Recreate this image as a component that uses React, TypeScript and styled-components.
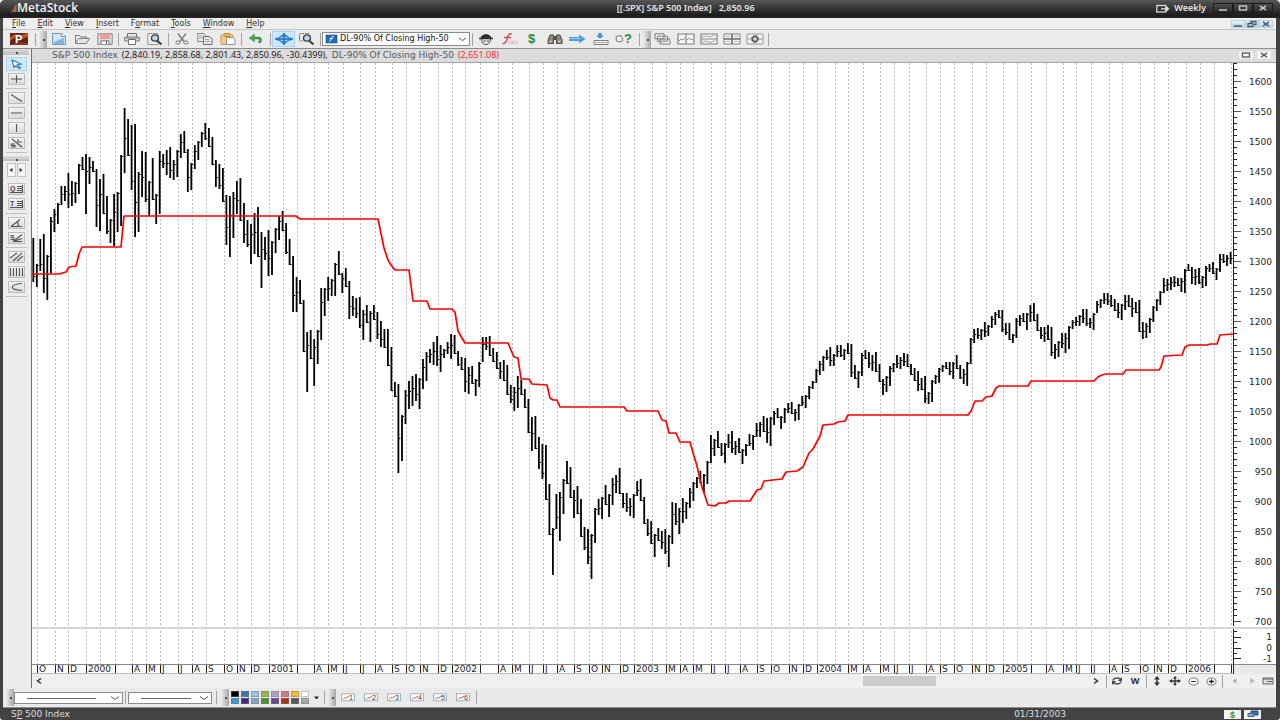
import React from "react";
import styled, { createGlobalStyle, css } from "styled-components";

const GlobalStyle = createGlobalStyle`
  * { box-sizing: border-box; }
  body { margin: 0; background: #ffffff; }
  button, select { font: inherit; color: inherit; margin: 0; padding: 0; border: 0; background: none; }
  svg { display: block; }
`;

const ui = '"DejaVu Sans", Verdana, sans-serif';
const noto = '"Noto Sans", sans-serif';
const arial = '"Liberation Sans", Arial, sans-serif';

const Frame = styled.div`
  display: flex;
  flex-direction: column;
  min-height: 100vh;
  background: #434343;
  border-radius: 5px 5px 3px 3px;
  overflow: hidden;
  font: 8px/12px ${ui};
  color: #303030;
`;

/* ---------- title bar ---------- */

const TitleBar = styled.header`
  display: flex;
  align-items: center;
  height: 18px;
  padding: 0 7px 2px 11px;
  background: linear-gradient(#565656 0, #474747 4px, #303030 10px, #1b1b1b 16px, #2a2a2a 18px);
  color: #e4e4e4;
`;

const Brand = styled.div`
  display: flex;
  align-items: center;
  flex: none;
  width: 48%;
  font: 600 12px/14px "Open Sans", sans-serif;
  color: #f4f4f4;
`;

const DocTitle = styled.h1`
  margin: 0;
  flex: 1;
  font: 600 9px/14px ${noto};
  white-space: pre;
`;

const Period = styled.div`
  display: flex;
  align-items: center;
  gap: 5px;
  margin-right: 7px;
  font: 600 9px/14px ${noto};
`;

const Controls = styled.div<{ $tone: "dark" | "blue" | "pale" }>`
  display: flex;
  gap: ${(p) => (p.$tone === "pale" ? 4 : 0)}px;
  button {
    display: flex;
    align-items: center;
    justify-content: center;
    width: ${(p) => (p.$tone === "dark" ? 20 : 14)}px;
    height: ${(p) => (p.$tone === "dark" ? 10 : 8)}px;
    ${(p) =>
      p.$tone === "dark" &&
      css`
        background: linear-gradient(#4d4d4d, #2a2a2a);
        border: 1px solid #1c1c1c;
        color: #c9c9c9;
      `}
    ${(p) =>
      p.$tone === "blue" &&
      css`
        background: linear-gradient(#eaf4fa, #b8d3e2);
        border: 1px solid #bcd2de;
        color: #3e5b72;
      `}
    ${(p) =>
      p.$tone === "pale" &&
      css`
        background: #f7f7f7;
        border: 1px solid #efefef;
        color: #606060;
      `}
  }
`;

/* ---------- body ---------- */

const Body = styled.div`
  display: flex;
  flex-direction: column;
  flex: 1;
  margin: 0 4px 0 3px;
  background: #ebebeb;
`;

const MenuBar = styled.nav`
  display: flex;
  align-items: center;
  gap: 12px;
  height: 12px;
  padding: 0 3px 0 9px;
  border-bottom: 1px solid #c6c6c6;
  background: #eeeeee;
`;

const MenuItem = styled.button`
  line-height: 11px;
  u { text-underline-offset: 1px; }
`;

const Push = styled.span`
  flex: 1;
`;

const ToolBar = styled.div`
  display: flex;
  align-items: center;
  height: 19px;
  padding-left: 6px;
  border-bottom: 1px solid #8c8c8c;
`;

const IconButton = styled.button<{ $w?: number; $on?: boolean }>`
  display: flex;
  align-items: center;
  justify-content: center;
  flex: none;
  width: ${(p) => p.$w ?? 23}px;
  height: 16px;
  ${(p) =>
    p.$on &&
    css`
      background: #cfe8fb;
      border: 1px solid #a9d2ee;
    `}
`;

const Sep = styled.span<{ $before?: number; $after?: number }>`
  flex: none;
  width: 1px;
  height: 13px;
  margin-left: ${(p) => p.$before ?? 2}px;
  margin-right: ${(p) => p.$after ?? 1}px;
  background: #a2a2a2;
`;

const Grip = styled.span`
  flex: none;
  width: 7px;
  height: 17px;
  background: radial-gradient(circle at 4px 9px, #505050 1px, transparent 1px), linear-gradient(90deg, #e2e2e2, #a6a6a6);
`;

const Combo = styled.label<{ $w: number; $h: number }>`
  position: relative;
  flex: none;
  display: block;
  width: ${(p) => p.$w}px;
  height: ${(p) => p.$h}px;
  select {
    appearance: none;
    display: block;
    width: 100%;
    height: 100%;
    padding: 0 16px 0 17px;
    border: 1px solid #8a8a8a;
    background: #ffffff;
    color: #101010;
    font: 8px/12px ${ui};
  }
  svg {
    position: absolute;
    top: 0;
    left: 0;
    pointer-events: none;
  }
`;

const Middle = styled.div`
  display: flex;
  flex: 1;
`;

const Palette = styled.aside`
  display: flex;
  flex-direction: column;
  align-items: center;
  width: 29px;
  padding-right: 2px;
  border-right: 1px solid #6f6f6f;
  background: #ececec;
`;

const PaletteGrip = styled.span<{ $h: number }>`
  width: 26px;
  height: ${(p) => p.$h}px;
  background: radial-gradient(circle at 14px 4px, #505050 1px, transparent 1px), linear-gradient(#dcdcdc, #bdbdbd);
`;

const Tool = styled.button<{ $on?: boolean }>`
  display: flex;
  align-items: center;
  justify-content: center;
  flex: none;
  width: ${(p) => (p.$on ? 21 : 17)}px;
  height: ${(p) => (p.$on ? 14 : 12)}px;
  margin: ${(p) => (p.$on ? "2px 0 2px" : "0 0 3px")};
  border: 1px solid ${(p) => (p.$on ? "#a9d2ee" : "#bdbdbd")};
  background: ${(p) => (p.$on ? "#cfe8fb" : "linear-gradient(#f4f4f4, #d9d9d9)")};
`;

const Rule = styled.span`
  flex: none;
  width: 21px;
  height: 1px;
  margin-bottom: 3px;
  background: #c2c2c2;
`;

const Arrows = styled.div`
  display: flex;
  gap: 1px;
  margin: 2px 0 6px;
  button {
    width: 9px;
    height: 14px;
    border: 1px solid #c4c4c4;
    background: #f6f6f6;
    display: flex;
    align-items: center;
    justify-content: center;
  }
`;

const ChartPane = styled.main`
  display: flex;
  flex-direction: column;
  flex: 1;
  min-width: 0;
`;

const ChartHeader = styled.div`
  display: flex;
  align-items: center;
  gap: 4px;
  height: 14px;
  padding: 0 5px 2px 20px;
  border-bottom: 1px solid #a5a5a5;
  background: #dcdcdc;
  white-space: nowrap;
`;

const SeriesName = styled.span`
  font: 9px/12px ${ui};
  color: #53575c;
`;

const SeriesValue = styled.span<{ $c: string }>`
  font: 9px/12px ${noto};
  color: ${(p) => p.$c};
`;

const Chart = styled.svg`
  width: 100%;
  flex: 1 1 611px;
  min-height: 0;
  background: #ffffff;
  font: 9px ${ui};
`;

const ScrollRow = styled.div`
  display: flex;
  align-items: center;
  height: 14px;
  padding: 0 1px 0 3px;
  background: #f0f0f0;
`;

const Track = styled.div`
  flex: 1;
  height: 10px;
  padding-left: 8px;
`;

const Thumb = styled.div`
  width: 7%;
  height: 10px;
  margin-left: 78%;
  background: #cbcbcb;
`;

const BottomBar = styled.div`
  display: flex;
  align-items: center;
  height: 20px;
  padding-left: 4px;
  border-bottom: 1px solid #8c8c8c;
  background: #eaeaea;
`;

const Swatches = styled.div`
  display: grid;
  grid-template-columns: repeat(8, 8px);
  gap: 1px 2px;
  margin-left: 2px;
`;

const Swatch = styled.button<{ $c: string }>`
  height: 6px;
  background: ${(p) => p.$c};
  border: 1px solid rgba(120, 120, 120, 0.45);
`;

const StatusBar = styled.footer`
  display: flex;
  align-items: center;
  height: 12px;
  padding: 0 19px 0 11px;
  font: 9px/12px ${ui};
  color: #dedede;
`;

const StatusDate = styled.time`
  margin-right: 155px;
`;

const StatusBox = styled.span`
  display: flex;
  align-items: center;
  justify-content: center;
  width: 17px;
  height: 9px;
  margin-left: 3px;
  background: #f2f2f2;
`;

/* ---------- chart data ---------- */

/* Weekly bars as [high, low] in plot units. */
const weeks: number[][] = [
  [238,282],[264,287],[239,271],[234,293],[255,300],[217,273],[209,232],[203,224],[186,205],[186,201],
  [173,208],[181,206],[182,203],[164,194],[157,170],[154,214],[157,184],[161,172],[169,227],[179,231],
  [174,214],[196,234],[219,243],[194,246],[192,232],[155,226],[108,173],[119,156],[125,190],[124,237],
  [172,232],[151,197],[152,202],[181,216],[158,200],[194,224],[151,214],[154,168],[150,175],[147,178],
  [160,180],[150,177],[134,158],[131,153],[149,192],[163,190],[145,169],[141,160],[132,147],[123,140],
  [128,147],[137,165],[160,187],[164,189],[168,202],[195,245],[196,257],[192,238],[181,214],[178,221],
  [203,243],[220,247],[224,264],[213,254],[207,257],[232,288],[237,260],[230,276],[241,275],[228,253],
  [216,240],[211,231],[223,254],[239,265],[256,312],[277,312],[280,304],[300,352],[332,392],[330,359],
  [339,386],[330,364],[288,340],[288,316],[277,301],[279,296],[263,296],[251,275],[273,293],[268,287],
  [281,319],[296,316],[298,318],[297,328],[310,340],[305,323],[311,342],[305,320],[312,339],[321,347],
  [329,348],[329,366],[347,391],[382,397],[384,473],[415,461],[390,424],[381,409],[376,406],[374,401],
  [378,409],[359,389],[352,381],[349,363],[342,365],[336,366],[345,372],[349,358],[342,354],[334,359],
  [335,354],[351,366],[357,370],[358,392],[367,394],[366,384],[379,396],[362,387],[337,362],[337,350],
  [336,356],[348,362],[352,369],[362,379],[360,381],[365,395],[385,403],[387,411],[376,408],[380,395],
  [389,408],[399,433],[417,451],[416,449],[437,469],[444,479],[445,500],[484,535],[528,575],[494,529],
  [492,541],[479,514],[461,484],[467,498],[490,518],[486,514],[499,537],[527,550],[529,564],[534,579],
  [508,543],[499,515],[497,519],[485,505],[494,517],[478,505],[475,493],[468,494],[493,508],[493,512],
  [498,516],[494,518],[481,496],[479,501],[497,524],[519,536],[521,544],[534,557],[528,541],[531,549],
  [529,554],[535,567],[502,544],[503,525],[508,534],[498,523],[502,519],[488,508],[482,501],[477,488],
  [471,483],[474,493],[461,484],[435,463],[439,456],[431,448],[443,456],[443,463],[434,448],[431,453],
  [441,455],[438,453],[449,464],[444,456],[434,446],[435,450],[423,437],[422,437],[416,432],[418,443],
  [417,446],[411,425],[408,418],[416,429],[408,423],[403,413],[402,414],[409,421],[404,420],[396,406],
  [395,408],[386,399],[381,389],[369,383],[361,375],[356,371],[350,360],[347,366],[354,366],[345,357],
  [345,357],[349,360],[343,354],[344,377],[365,379],[371,388],[353,376],[350,359],[352,368],[355,371],
  [352,372],[364,382],[379,395],[376,392],[366,386],[363,372],[355,368],[357,369],[353,366],[354,367],
  [364,375],[368,381],[371,391],[378,390],[376,403],[392,404],[380,402],[375,384],[368,383],[365,372],
  [362,369],[362,375],[362,379],[355,369],[365,379],[369,384],[362,386],[338,364],[329,343],[328,339],
  [329,340],[322,337],[325,336],[316,328],[312,325],[310,318],[310,332],[323,335],[323,340],[334,343],
  [318,338],[315,326],[313,322],[313,330],[305,322],[303,321],[314,331],[327,339],[327,342],[325,340],
  [327,356],[344,359],[341,357],[333,348],[333,353],[326,349],[320,329],[317,326],[315,326],[309,323],
  [309,326],[318,328],[313,330],[301,313],[299,308],[293,304],[293,305],[295,307],[299,311],[303,318],
  [304,320],[295,310],[295,307],[298,317],[302,313],[300,332],[322,339],[323,338],[318,333],[306,322],
  [299,311],[291,305],[278,293],[279,291],[277,290],[276,287],[278,286],[278,292],[269,293],[264,271],
  [267,284],[269,285],[268,284],[276,288],[266,286],[264,272],[262,274],[268,280],[254,272],[254,263],
  [255,266],[252,264],
];

const weekX = (i: number) => (33.3 + i * 3.511).toFixed(1);

const rangePath = weeks.map(([high, low], i) => `M${weekX(i)} ${high}V${low}`).join("");

const closePath = weeks
  .map(([high, low], i) => {
    const next = weeks[Math.min(i + 1, weeks.length - 1)];
    const close = Math.round(Math.max(high + 1, Math.min(low - 1, (next[0] + next[1]) / 2)));
    return `M${weekX(i)} ${close + 0.5}h2`;
  })
  .join("");

const stopLine =
  "32,274 60,274 62,273 66,272 69,267 76,266 79,254 82,247 121,247 124,216 296,216 300,219 378,219 384,248 388,260 391,265 395,270 409,270 413,301 427,301 430,309 452,309 455,312 458,331 462,338 465,343 508,343 514,357 518,358 521,379 529,379 532,384 547,385 550,398 553,400 557,400 560,407 624,407 627,411 658,411 662,420 666,421 669,433 676,433 680,442 690,442 694,456 697,466 701,484 708,505 715,506 719,503 726,503 729,501 750,501 757,490 761,489 764,481 782,479 786,472 797,471 803,467 809,453 813,449 820,436 823,425 834,424 838,422 845,421 848,415 968,415 971,411 975,401 982,401 986,397 992,396 996,388 999,386 1028,386 1031,381 1094,381 1098,377 1102,375 1106,374 1123,374 1126,370 1159,370 1161,367 1164,356 1182,355 1185,347 1189,345 1207,345 1210,344 1217,344 1220,335 1233,334";

/* Month starts; "-" has a grid line only, "" has an unlabelled tick. */
const months: [number, string][] = [
  [37,"O"],[55,"N"],[68,"D"],[86,"2000"],[100,"-"],[115,""],[132,"A"],[146,"M"],[160,"J"],[178,"J"],[192,"A"],[206,"S"],
  [224,"O"],[237,"N"],[251,"D"],[269,"2001"],[283,"-"],[297,""],[314,"A"],[328,"M"],[343,"J"],[360,"J"],[375,"A"],[392,"S"],
  [406,"O"],[420,"N"],[438,"D"],[452,"2002"],[465,"-"],[480,""],[498,"A"],[512,"M"],[529,"J"],[543,"J"],[557,"A"],[574,"S"],
  [589,"O"],[602,"N"],[620,"D"],[634,"2003"],[652,"-"],[666,"M"],[680,"A"],[693,"M"],[711,"J"],[725,"J"],[740,"A"],[757,"S"],
  [771,"O"],[789,"N"],[803,"D"],[817,"2004"],[835,"-"],[848,"M"],[863,"A"],[880,"M"],[894,"J"],[909,"J"],[926,"A"],[940,"S"],
  [954,"O"],[972,"N"],[986,"D"],[1003,"2005"],[1017,"-"],[1031,""],[1046,"A"],[1063,"M"],[1076,"J"],[1091,"J"],[1109,"A"],[1122,"S"],
  [1140,"O"],[1154,"N"],[1168,"D"],[1186,"2006"],[1200,"-"],[1214,""],[1231,""],
];

const priceY = (p: number) => Math.round(81 + (1600 - p) * 0.5996);
const minorPrices = Array.from({ length: 94 }, (_, i) => 1630 - i * 10);
const majorPrices = Array.from({ length: 19 }, (_, i) => 1600 - i * 50);

function PriceChart() {
  return (
    <Chart viewBox="32 63 1244 611" preserveAspectRatio="none" role="img" aria-label="S&P 500 weekly price chart">
      <g shapeRendering="crispEdges" fill="none">
        <path d={months.map(([x]) => `M${x + 0.5} 63V664`).join("")} stroke="#bdbdbd" strokeDasharray="2 2" />
        <path d="M32 627.5H1276" stroke="#d6d6d6" strokeWidth="2" />
        <rect x="1234" y="665" width="42" height="9" fill="#e9e9e9" />
        <path d="M32 664.5H1276" stroke="#858585" />
        <path d={months.filter(([, t]) => t !== "-").map(([x]) => `M${x + 0.5} 665V674`).join("")} stroke="#202020" />
        <path d="M32 673.5H1233" stroke="#bdbdbd" />
      </g>
      <path d={rangePath} stroke="#000000" strokeWidth="1.8" fill="none" />
      <path d={closePath} stroke="#000000" strokeWidth="1" fill="none" />
      <polyline points={stopLine} stroke="#ff0000" strokeWidth="1.7" fill="none" strokeLinejoin="round" />
      <g shapeRendering="crispEdges" stroke="#222222" fill="none">
        <path d="M1233.5 63V626M1233.5 629V674" />
        <path d={minorPrices.map((p) => `M1234 ${priceY(p) + 0.5}h3`).join("")} />
        <path d={majorPrices.map((p) => `M1234 ${priceY(p) + 0.5}h7`).join("")} stroke="#555555" />
        <path d="M1234 631.5h3M1234 637.5h7M1234 642.5h3M1234 648.5h7M1234 653.5h3M1234 658.5h7" />
      </g>
      <g textAnchor="end" fill="#262626">
        {majorPrices.map((p) => (
          <text key={p} x="1272" y={priceY(p) + 4}>{p}</text>
        ))}
        <text x="1272" y="640">1</text>
        <text x="1272" y="651">0</text>
        <text x="1272" y="662">-1</text>
      </g>
      <g fill="#1c1c2c">
        {months.filter(([, t]) => t && t !== "-").map(([x, t]) => (
          <text key={x} x={x + 2} y="672">{t}</text>
        ))}
      </g>
    </Chart>
  );
}

/* ---------- icons ---------- */

type Draw = { w?: number; h?: number; children: React.ReactNode };
const Pic = ({ w = 16, h = 12, children }: Draw) => (
  <svg width={w} height={h} viewBox={`0 0 ${w} ${h}`} fill="none" stroke="#777" strokeWidth="1" aria-hidden="true">
    {children}
  </svg>
);

const Minimize = () => <Pic w={10} h={8}><path d="M1 6h8" stroke="currentColor" strokeWidth="1.5" /></Pic>;
const Maximize = () => <Pic w={10} h={8}><rect x="1.5" y="2" width="7" height="4" stroke="currentColor" strokeWidth="1.4" /></Pic>;
const Restore = () => <Pic w={10} h={8}><path d="M4 3V1.5h5v3H7M1 3.5h5v3H1z" stroke="currentColor" strokeWidth="1.3" /></Pic>;
const Close = () => <Pic w={10} h={8}><path d="M2 1.8l6 4.4M8 1.8L2 6.2" stroke="currentColor" strokeWidth="1.5" /></Pic>;

const Magnifier = () => (
  <>
    <path d="M10.5 8l4 3.5" stroke="#303a42" strokeWidth="2" />
    <ellipse cx="8" cy="5" rx="3.5" ry="3.2" fill="#b9d8ee" stroke="#303a42" strokeWidth="1.3" />
  </>
);

const icons = {
  file: <Pic><path d="M1.5.5h9l4 3v8h-13z" fill="#cfe6f6" stroke="#7c98ac" /><path d="M10.5.5v3h4" fill="#fff" stroke="#7c98ac" /><path d="M3 9l10-4v6H3z" fill="#7ab6e2" stroke="none" /></Pic>,
  folder: <Pic><path d="M1.5 10.5v-8h4l1 1.5h6v2" fill="#eee" /><path d="M1.5 10.5l3-5h11l-3 5z" fill="#e4e6e6" stroke="#7d8588" /></Pic>,
  save: <Pic><path d="M.8.8h14.4v10.5H.8z" fill="#dcdcdc" stroke="#868686" /><path d="M3 1h10v5H3z" fill="#ef9a96" stroke="none" /><path d="M4 11V7.800h8V11" fill="#fff" /><path d="M9.500 8v3" stroke="#555" /></Pic>,
  print: <Pic><path d="M3.500 4V.5h9V4M.8 4h14.400v4H.8z" fill="#e6e6e6" stroke="#707070" /><path d="M4.500 6.500h7v5h-7z" fill="#fff" stroke="#707070" /><path d="M2 5.500h12" stroke="#999" /></Pic>,
  preview: <Pic><path d="M.8.5h10v11H.8z" fill="#eee" stroke="#999" /><Magnifier /></Pic>,
  cut: <Pic><path d="M4 .5l6 8M12 .5l-6 8" stroke="#7a7a7a" strokeWidth="1.300" /><ellipse cx="4" cy="9.500" rx="2.200" ry="1.600" /><ellipse cx="12" cy="9.500" rx="2.200" ry="1.600" /></Pic>,
  copy: <Pic><path d="M.8.5h6l2 2v6h-8z" fill="#eee" stroke="#808080" /><path d="M6.500 3.500h6l2.500 2v6H6.500z" fill="#e6e6e6" stroke="#707070" /><path d="M8 6.500h4M8 8.500h5M2 3h4M2 5h4" stroke="#aaa" /></Pic>,
  paste: <Pic><path d="M1 2h12v9.500H1z" fill="#f3cf83" stroke="#b8a070" /><path d="M4 .5h6v3H4z" fill="#f0b43c" stroke="#c2923a" /><path d="M6.500 4.500h6l2.500 2v5H6.500z" fill="#fff" stroke="#8d9298" /></Pic>,
  undo: <Pic><path d="M5 5H10c3.500 0 3.500 3.500.5 4.500" stroke="#3d8f4d" strokeWidth="2.400" /><path d="M1 5l5.500-4v8z" fill="#4fa35c" stroke="#3d8f4d" strokeWidth=".5" /></Pic>,
  cross: <Pic w={18}><ellipse cx="9" cy="6" rx="5" ry="3.500" fill="#8cc6f2" stroke="#1f7fd0" strokeWidth="1.300" /><path d="M9 0v12M0 6h18" stroke="#1f6fc0" strokeWidth="1.400" /><path d="M9 0l2 2H7zM9 12l2-2H7zM0 6l3-2v4zM18 6l-3-2v4z" fill="#1f7fd0" stroke="none" /></Pic>,
  zoomArea: <Pic><path d="M.5 5V.5h10" stroke="#666" strokeDasharray="1.500 1" /><path d="M.5 5v3h4" stroke="#666" strokeDasharray="1.500 1" /><Magnifier /></Pic>,
  expert: <Pic><ellipse cx="8" cy="7" rx="4.500" ry="4.500" fill="#e9e4de" stroke="#555" /><path d="M3 5.500C3 .5 13 .5 13 5.500z" fill="#303030" stroke="#222" /><path d="M1 5.500h14" stroke="#333" strokeWidth="1.500" /><path d="M5.500 8h2M9 8h2" stroke="#333" /></Pic>,
  fx: <Pic w={18}><path d="M12 1C9 0 8 2 7.500 4.500S6 11 2.500 10.500M4 4.500h7" stroke="#cf4a63" strokeWidth="1.300" /><path d="M9.500 7.500c-1 1-1 2.500 0 3.500M16 7.500c1 1 1 2.500 0 3.500M11 8l3.500 3M14.500 8L11 11" stroke="#df8494" strokeWidth=".8" /></Pic>,
  binoc: <Pic><path d="M3 2h3.500v8.500H1V7zM13 2H9.500v8.500H15V7z" fill="#8d8980" stroke="#4d4944" /><path d="M6.500 3h3v4h-3z" fill="#5c564e" stroke="none" /><path d="M2.500 7.500h2v2h-2zM11.500 7.500h2v2h-2z" fill="#e8c98e" stroke="none" /></Pic>,
  arrow: <Pic w={17}><path d="M0 4h10V1.500L16.500 6 10 10.500V8H0z" fill="#4a9ede" stroke="none" /><path d="M0 5.500h11" stroke="#9cd0f5" /></Pic>,
  tray: <Pic><path d="M1 7.500h14v4H1z" fill="#ededed" stroke="#808080" /><path d="M2.500 9.500h11" stroke="#aaa" /><path d="M5.500 2.500V0h3v2.500h2.500L7 5.500l-4-3z" fill="#3b8fd6" stroke="none" /></Pic>,
  cascade: <Pic w={17}><path d="M1 .8h9v5H1zM3.500 3.200h10v5h-10zM6 6h10v5H6z" fill="#f2f2f2" stroke="#7d7d7d" /><path d="M7 9.500l3-2 2 1 3-2" stroke="#aaa" /></Pic>,
  columns: <Pic w={18}><path d="M1 1h16v10H1zM9 1v10" fill="#f6f6f6" stroke="#808080" strokeWidth="1.200" /><path d="M2 8l2-2 2 1 2-2M10 7l2-2 2 2 2-1" stroke="#8e8e8e" /></Pic>,
  rows: <Pic w={18}><path d="M1 1h16v10H1zM1 6h16" fill="#f6f6f6" stroke="#808080" strokeWidth="1.200" /><path d="M2 4l4-1 4 1 5-2M2 9l4-1 4 1.500 5-2" stroke="#a4a4a4" /></Pic>,
  tile: <Pic w={18}><path d="M1 1h16v10H1z" fill="#f6f6f6" stroke="#808080" /><path d="M1 6h16M9 1v10" stroke="#6a6a6a" strokeWidth="1.500" /><path d="M2.500 3.500h4.500M11 3.500h4.500M2.500 8.500h4.500M11 8.500h4.500" stroke="#bdbdbd" /></Pic>,
  layout: <Pic w={18}><path d="M1 1h16v10H1zM1 6h16" fill="#f2f2f2" stroke="#999" /><circle cx="9" cy="6" r="3" fill="#ddd" stroke="#4b4b4b" strokeWidth="1.800" strokeDasharray="1.600 .7" /><circle cx="9" cy="6" r="2.400" stroke="#4b4b4b" /></Pic>,
};

const Bold = styled.span<{ $c: string }>`
  font: 700 13px/14px ${arial};
  color: ${(p) => p.$c};
`;

const Letter = styled.span`
  font: 700 9px/14px ${noto};
`;

const Btn = ({ name, children, ...rest }: { name: string; children: React.ReactNode; $w?: number; $on?: boolean }) => (
  <IconButton type="button" aria-label={name} title={name} {...rest}>{children}</IconButton>
);

const PalTool = ({ name, d, on, letter }: { name: string; d: string; on?: boolean; letter?: string }) => (
  <Tool type="button" aria-label={name} title={name} $on={on}>
    <Pic w={15} h={10}>
      {letter && <text x="1" y="7" fontFamily="Liberation Sans" fontSize="7" fontWeight="700" fill="#444" stroke="none">{letter}</text>}
      <path d={d} stroke={on ? "#2474ad" : "#555"} strokeWidth="1.100" fill={on ? "#fff" : "none"} />
    </Pic>
  </Tool>
);

const menus = [["", "F", "ile"], ["", "E", "dit"], ["", "V", "iew"], ["", "I", "nsert"], ["F", "o", "rmat"], ["", "T", "ools"], ["", "W", "indow"], ["", "H", "elp"]];

const colours = [
  "#000000", "#3a76ab", "#93c6e8", "#9ab559", "#b3a0c9", "#cf7b7b", "#efbe35", "#ffffff",
  "#3c9bd6", "#4b2380", "#84a6c2", "#4b8f35", "#6b4494", "#b0301c", "#595959", "#a6a6a6",
];

const LineCombo = ({ w, name }: { w: number; name: string }) => (
  <Combo $w={w} $h={12}>
    <select aria-label={name}><option value="solid" aria-label="Solid" /></select>
    <Pic w={w} h={12}>
      <path d={`M13 6.500H${Math.round(w * 0.75)}`} stroke="#666" />
      <path d={`M${w - 12} 4.500l4 3 4-3`} stroke="#555" />
    </Pic>
  </Combo>
);

export default function App() {
  return (
    <Frame>
      <GlobalStyle />
      <TitleBar>
        <Brand>
          <Pic w={6} h={10}><path d="M0 9L5.500 1v8z" fill="#d5683a" stroke="none" /><path d="M1.500 9V6M3.500 9V4" stroke="#5b3020" strokeWidth=".6" /></Pic>
          MetaStock
        </Brand>
        <DocTitle>{"[[.SPX] S&P 500 Index]   2,850.96"}</DocTitle>
        <Period>
          <Pic w={13} h={9}><rect x=".8" y="1.500" width="9" height="6.500" stroke="#d8d8d8" strokeWidth="1.300" /><path d="M5 4.800h7.500M10 2.500l2.500 2.300L10 7" stroke="#e8e8e8" strokeWidth="1.300" /></Pic>
          Weekly
        </Period>
        <Controls $tone="dark">
          <button type="button" aria-label="Minimize"><Minimize /></button>
          <button type="button" aria-label="Maximize"><Maximize /></button>
          <button type="button" aria-label="Close"><Close /></button>
        </Controls>
      </TitleBar>

      <Body>
        <MenuBar>
          {menus.map(([a, b, c]) => (
            <MenuItem key={b} type="button">{a}<u>{b}</u>{c}</MenuItem>
          ))}
          <Push />
          <Controls $tone="blue">
            <button type="button" aria-label="Minimize chart"><Minimize /></button>
            <button type="button" aria-label="Restore chart"><Restore /></button>
            <button type="button" aria-label="Close chart"><Close /></button>
          </Controls>
        </MenuBar>

        <ToolBar>
          <Btn name="Power Console" $w={20}>
            <Pic w={18} h={12}>
              <rect width="18" height="12" fill="#5b2618" stroke="none" />
              <path d="M0 4l5-3 6 1 7-2v4l-6 2-6-2-6 4z" fill="#b9542f" stroke="none" />
              <path d="M0 12l7-3 11 1v2z" fill="#8c3a22" stroke="none" />
              <text x="5" y="10" fontFamily="Liberation Sans" fontSize="11" fontWeight="700" fill="#fff" stroke="none">P</text>
            </Pic>
          </Btn>
          <Sep $before={6} $after={4} />
          <Grip />
          <Btn name="New">{icons.file}</Btn>
          <Btn name="Open">{icons.folder}</Btn>
          <Btn name="Save">{icons.save}</Btn>
          <Sep />
          <Btn name="Print">{icons.print}</Btn>
          <Btn name="Print preview">{icons.preview}</Btn>
          <Sep />
          <Btn name="Cut">{icons.cut}</Btn>
          <Btn name="Copy">{icons.copy}</Btn>
          <Btn name="Paste">{icons.paste}</Btn>
          <Sep />
          <Btn name="Undo" $w={25}>{icons.undo}</Btn>
          <Sep />
          <Btn name="Crosshair" $on>{icons.cross}</Btn>
          <Btn name="Zoom box">{icons.zoomArea}</Btn>
          <Sep />
          <Combo $w={148} $h={14}>
            <select aria-label="Indicator"><option>DL-90% Of Closing High-50</option></select>
            <Pic w={148} h={14}>
              <rect x="4" y="3" width="11" height="8" fill="#1c6db8" stroke="#134b80" strokeWidth=".6" />
              <path d="M12 4.500c-2-.5-2.500.5-3 2.500S8 9.500 7 9.500M7.500 6.500h3.500" stroke="#fff" />
              <path d="M137 6l3.500 2.500L144 6" stroke="#555" />
            </Pic>
          </Combo>
          <Sep />
          <Btn name="Expert Advisor">{icons.expert}</Btn>
          <Btn name="Indicator Builder">{icons.fx}</Btn>
          <Btn name="System Tester"><Bold $c="#2f8a35">$</Bold></Btn>
          <Btn name="Explorer">{icons.binoc}</Btn>
          <Btn name="Forecaster">{icons.arrow}</Btn>
          <Btn name="Download">{icons.tray}</Btn>
          <Btn name="Help">
            <Pic w={9} h={10}><path d="M1 2.500l5-1 2 5-3 1.500-3.500-1z" fill="#eee" stroke="#777" /></Pic>
            <Bold $c="#2f8a35">?</Bold>
          </Btn>
          <Sep $before={4} $after={4} />
          <Grip />
          <Btn name="Cascade">{icons.cascade}</Btn>
          <Btn name="Tile columns">{icons.columns}</Btn>
          <Btn name="Tile rows">{icons.rows}</Btn>
          <Btn name="Tile all">{icons.tile}</Btn>
          <Btn name="Layouts">{icons.layout}</Btn>
          <Sep />
        </ToolBar>

        <Middle>
          <Palette>
            <PaletteGrip $h={6} />
            <PalTool name="Select" on d="M3 1l9 4-3.500.8 3 3-1.500.8-3-3L5 8.500z" />
            <PalTool name="Crosshair" d="M2 5h11M7.500 1v8" />
            <Rule />
            <PalTool name="Trendline" d="M2 1.500l11 7" />
            <PalTool name="Horizontal line" d="M2 5h11" />
            <PalTool name="Vertical line" d="M7.500 1v8" />
            <PalTool name="Speed lines" d="M3 1l10 8M9 1v3h4M6 6H2.500v1.500H6V9H2" />
            <Rule />
            <PaletteGrip $h={5} />
            <Arrows>
              <button type="button" aria-label="Previous"><Pic w={4} h={6}><path d="M3.500 1v4L.5 3z" fill="#222" stroke="none" /></Pic></button>
              <button type="button" aria-label="Next"><Pic w={4} h={6}><path d="M.5 1v4l3-2z" fill="#222" stroke="none" /></Pic></button>
            </Arrows>
            <PalTool name="Quote" letter="Q" d="M8 2.500h5M8 4.500h5M8 6.500h5M1 8.500h12.500V1" />
            <PalTool name="Text" letter="T" d="M8 2.500h5M8 4.500h5M8 6.500h5M1 8.500h12.500V1" />
            <Rule />
            <PalTool name="Angle" d="M2 8.500h11M2 8.500l9-7M8 4c1.500 1 1.500 3 1 4.500" />
            <PalTool name="Fan" letter="S" d="M4 8.500h9M4 8.500l9-3M4 8.500l9-7" />
            <Rule />
            <PalTool name="Channel" d="M1 6l7-5M4 9l9-8M8 9l6-5" />
            <PalTool name="Cycle lines" d="M1.500 1v8M4.500 1v8M7.500 1v8M10.500 1v8M13.500 1v8" />
            <PalTool name="Arc" d="M13 1.500C0 2.500 0 7.500 13 8.500" />
            <Rule />
          </Palette>

          <ChartPane>
            <ChartHeader>
              <SeriesName>S&amp;P 500 Index</SeriesName>
              <SeriesValue $c="#1e2226">(2,840.19, 2,858.68, 2,801.43, 2,850.96, -30.4399),</SeriesValue>
              <SeriesName>DL-90% Of Closing High-50</SeriesName>
              <SeriesValue $c="#ff2a2a">(2,651.08)</SeriesValue>
              <Push />
              <Controls $tone="pale">
                <button type="button" aria-label="Maximize pane"><Maximize /></button>
                <button type="button" aria-label="Close pane"><Close /></button>
              </Controls>
            </ChartHeader>
            <PriceChart />
            <ScrollRow>
              <Btn name="Scroll left" $w={8}><Pic w={6} h={8}><path d="M5 1.500L1.500 4 5 6.500" stroke="#333" strokeWidth="1.500" /></Pic></Btn>
              <Track><Thumb /></Track>
              <Btn name="Scroll right" $w={8}><Pic w={6} h={8}><path d="M1 1.500L4.500 4 1 6.500" stroke="#333" strokeWidth="1.500" /></Pic></Btn>
              <Sep $before={6} $after={1} />
              <Btn name="Refresh" $w={18}><Pic w={12} h={10}><path d="M2 4.500C2.500 1.500 8 1.500 9.500 3.500M10 5.500C9.500 8.500 4 8.500 2.500 6.500" stroke="#444" strokeWidth="1.500" /><path d="M11 1v4H7zM1 9V5h4z" fill="#444" stroke="none" /></Pic></Btn>
              <Btn name="Weekly" $w={18}><Letter>W</Letter></Btn>
              <Sep $before={2} $after={1} />
              <Btn name="Fit height" $w={18}><Pic w={8} h={10}><path d="M4 2v6" stroke="#333" strokeWidth="1.500" /><path d="M4 0l3 3.500H1zM4 10l3-3.500H1z" fill="#333" stroke="none" /></Pic></Btn>
              <Btn name="Fit all" $w={18}><Pic w={12} h={10}><path d="M6 1v8M1 5h10" stroke="#333" strokeWidth="1.300" /><path d="M6 0l2 2.500H4zM6 10l2-2.500H4zM0 5l3-2v4zM12 5L9 3v4z" fill="#333" stroke="none" /></Pic></Btn>
              <Btn name="Zoom out" $w={18}><Pic w={11} h={9}><ellipse cx="5.500" cy="4.500" rx="4.500" ry="3.500" fill="#fff" /><path d="M3 4.500h5" stroke="#333" /></Pic></Btn>
              <Btn name="Zoom in" $w={18}><Pic w={11} h={9}><ellipse cx="5.500" cy="4.500" rx="4.500" ry="3.500" fill="#fff" /><path d="M3 4.500h5M5.500 2.500v4" stroke="#222" strokeWidth="1.300" /></Pic></Btn>
              <Sep $before={2} $after={2} />
              <Btn name="Back" $w={18}><Pic w={5} h={8}><path d="M4.500 1v6L.5 4z" fill="#b4b4b4" stroke="none" /></Pic></Btn>
              <Btn name="Forward" $w={18}><Pic w={5} h={8}><path d="M.5 1v6l4-3z" fill="#b4b4b4" stroke="none" /></Pic></Btn>
              <Btn name="Data window" $w={14}><Pic w={12} h={8}><path d="M1 1h10v6H1z" fill="#ddd" stroke="#666" /><path d="M1 2h10M5 4.500h5" stroke="#666" /></Pic></Btn>
            </ScrollRow>
          </ChartPane>
        </Middle>

        <BottomBar>
          <Grip />
          <LineCombo w={109} name="Line style" />
          <Sep $before={2} $after={2} />
          <LineCombo w={84} name="Line weight" />
          <Sep $before={4} $after={5} />
          <Grip />
          <Swatches>
            {colours.map((c) => <Swatch key={c} $c={c} type="button" aria-label={`Colour ${c}`} />)}
          </Swatches>
          <Btn name="More colours" $w={13}><Pic w={6} h={4}><path d="M1 .5h5L3.500 3.500z" fill="#222" stroke="none" /></Pic></Btn>
          <Sep $before={2} $after={4} />
          <Grip />
          {[1, 2, 3, 4, 5, 6].map((n) => (
            <Btn key={n} name={`Template ${n}`}>
              <Pic w={14} h={9}>
                <rect x=".5" y=".8" width="13" height="7" fill="#fff" stroke="#9db4c4" />
                <path d="M2 6.500l2-2 1.500.5L8 3" stroke="#cc5050" />
                <text x="8" y="7" fontFamily="Liberation Sans" fontSize="7" fill="#333" stroke="none">{n}</text>
              </Pic>
            </Btn>
          ))}
          <Sep />
        </BottomBar>
      </Body>

      <StatusBar>
        <span>S<u>P</u> 500 Index</span>
        <Push />
        <StatusDate>01/31/2003</StatusDate>
        <StatusBox>
          <svg width="8" height="9" viewBox="0 0 8 9" aria-hidden="true"><text x="1" y="8" fontFamily="Liberation Sans" fontSize="9" fontWeight="700" fill="#2f8a35">$</text></svg>
        </StatusBox>
        <StatusBox>
          <Pic w={12} h={8}><path d="M4 1h7v4H4z" fill="#3f6fa8" stroke="#2c4f7a" /><path d="M1 3.500h6v3H1z" fill="#8fb2d6" stroke="#3f5f85" /></Pic>
        </StatusBox>
      </StatusBar>
    </Frame>
  );
}
